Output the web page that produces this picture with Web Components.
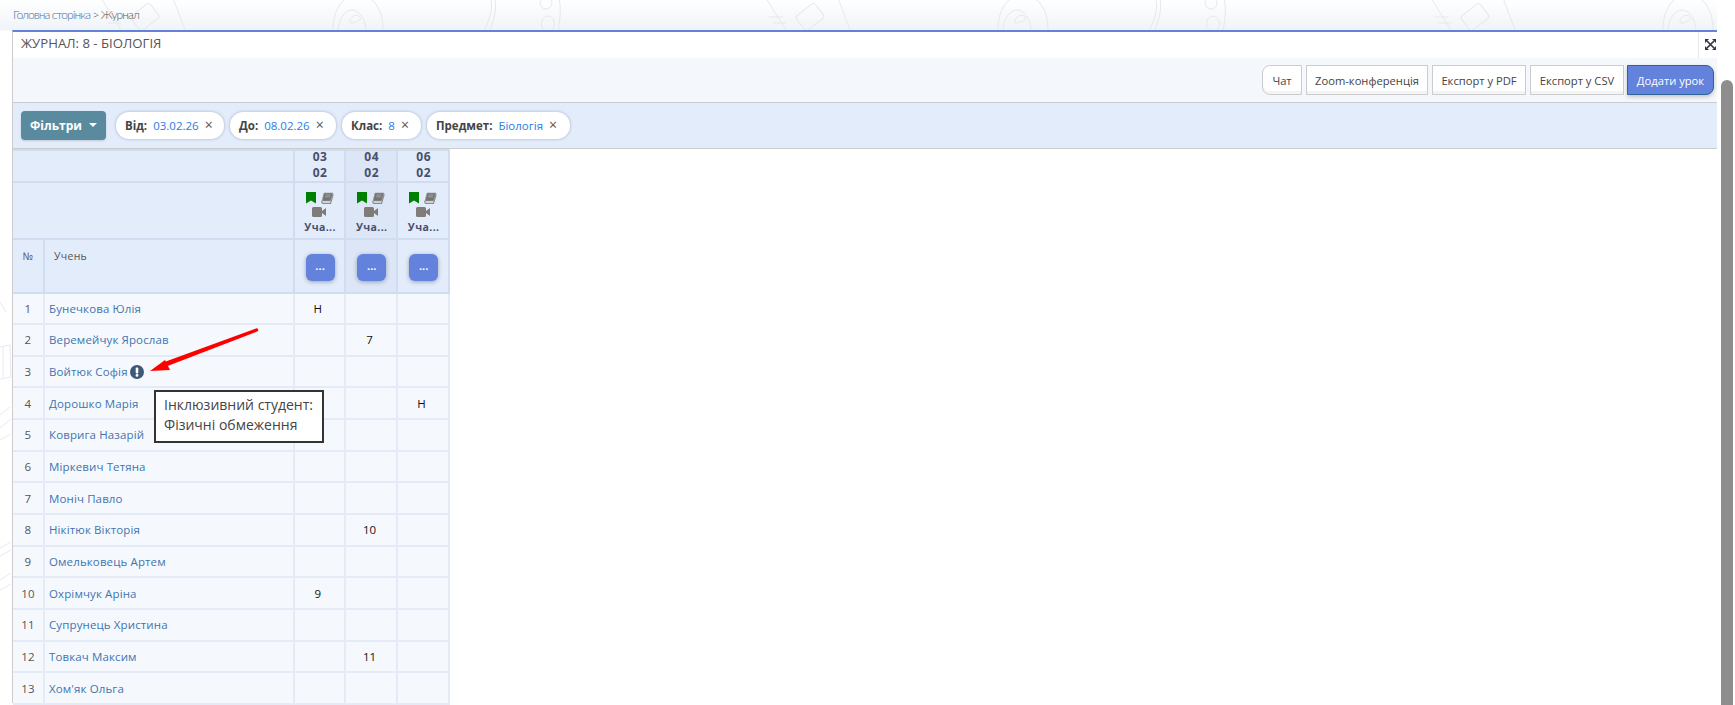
<!DOCTYPE html>
<html lang="uk"><head><meta charset="utf-8"><title>Журнал</title>
<style>
html,body{margin:0;height:705px;overflow:hidden;background:#fff;font-family:"Open Sans","Noto Sans",sans-serif}
</style></head>
<body>
<jr-app>
  <jr-breadcrumb slot="crumbs"><a>Головна сторінка</a> &gt; Журнал</jr-breadcrumb>
  <jr-panel heading="ЖУРНАЛ: 8 - БІОЛОГІЯ">
    <jr-toolbar slot="toolbar">
      <jr-button class="first" style="width:40px">Чат</jr-button>
      <jr-button style="width:122px">Zoom-конференція</jr-button>
      <jr-button style="width:94px">Експорт у PDF</jr-button>
      <jr-button style="width:94px">Експорт у CSV</jr-button>
      <jr-button class="primary" style="width:87px;margin-left:-1px">Додати урок</jr-button>
    </jr-toolbar>
    <jr-filters slot="filters">
      <jr-filter-button>Фільтри</jr-filter-button>
      <jr-chip style="width:108px" label="Від:" value="03.02.26"></jr-chip>
      <jr-chip style="width:106px" label="До:" value="08.02.26"></jr-chip>
      <jr-chip style="width:79px" label="Клас:" value="8"></jr-chip>
      <jr-chip style="width:143px" label="Предмет:" value="Біологія"></jr-chip>
    </jr-filters>
    <jr-gradebook></jr-gradebook>
  </jr-panel>
</jr-app>
<script>
function el(name,css,html){
  customElements.define(name,class extends HTMLElement{
    connectedCallback(){
      if(this.shadowRoot)return;
      const r=this.attachShadow({mode:'open'});
      const t=typeof html==='function'?html(this):html;
      r.innerHTML='<style>'+css+'</style>'+t;
    }
  });
}
const tile=(x)=>`<g transform="translate(${x} 0)" fill="none" stroke="#e6e8ec" stroke-width="1">
<path d="M101 -2l20 32M173 -2l12 32M104 17h14M108 23h13"/>
<rect x="133" y="8" width="24" height="18" rx="3" transform="rotate(-38 145 17)"/>
<ellipse cx="358" cy="28" rx="25" ry="34"/><ellipse cx="352" cy="32" rx="14" ry="22"/><path d="M350 20c2-5 8-6 10-3s-2 4-5 5-5 3-5-2"/>
<path d="M490 -5c4 14 0 24-8 40M494 -5c4 14 0 24-6 40"/>
<circle cx="546" cy="3" r="6"/><ellipse cx="548" cy="24" rx="6.500" ry="8"/><ellipse cx="546" cy="44" rx="6" ry="7"/><path d="M558 -5c4 12 2 24 0 36"/>
</g>`;
el('jr-app',`:host{display:block;position:relative;width:1735px;height:705px;overflow:hidden;
  background:linear-gradient(#fff 0,#f0f3f8 30px,#fff 31px)}
.deco{position:absolute;left:0;top:0;width:1735px;height:705px;pointer-events:none}
.wrap{position:relative;display:grid;grid-template-columns:1fr 18px;height:705px}
.main{display:flex;flex-direction:column;min-width:0;padding-left:12px}
.sb{background:#fff;padding:80px 2px 0 4px;box-sizing:border-box}
.sb i{display:block;height:625px;background:#8e8e8e;border-radius:6px 6px 0 0}`,
()=>`<svg class="deco" viewBox="0 0 1735 705" aria-hidden="true">${tile(0)}${tile(665)}${tile(1330)}
<g fill="none" stroke="#e8e9ed"><path d="M0 347l10-2 1 32-11 2M3 347v30M0 302l6 10M0 415l10-8M0 428l11-9M0 440l11-6M0 548l11-6M0 556l11-6M0 580l11-7M0 590l11-6"/></g></svg>
<div class="wrap"><div class="main"><slot name="crumbs"></slot><slot></slot></div><div class="sb"><i></i></div></div>`);
el('jr-breadcrumb',`:host{display:block;height:30px;box-sizing:border-box;padding:7px 0 0 1px;font:300 12px/16px Lato,sans-serif;letter-spacing:-.9px;color:#555}
::slotted(a){color:#4a6f9e}`,`<slot></slot>`);
el('jr-panel',`:host{display:block;border-top:2px solid #6282dc;border-left:1px solid #ccc;background:#fff;height:673px;box-sizing:border-box}
.head{display:flex;height:26px;align-items:center;background:#fff;color:#555;font:400 13.200px "Open Sans",sans-serif}
.title{flex:1;padding:0 0 5px 8px}
.exp{width:19px;height:26px;box-sizing:border-box;border-left:1px solid #e8e8e8;padding:7px 0 0 6px}
svg{display:block}`,
h=>`<div class="head"><div class="title">${h.getAttribute('heading')}</div><div class="exp"><svg width="11" height="11" viewBox="0 0 11 11"><path d="M0 0h4L0 4zM11 0v4L7 0zM0 11V7l4 4zM11 11H7l4-4z" fill="#2d3340"/><path d="M2 2l7 7M9 2L2 9" stroke="#2d3340" stroke-width="1.600"/></svg></div></div><slot name="toolbar"></slot><slot name="filters"></slot><slot></slot>`);
el('jr-toolbar',`:host{display:flex;justify-content:flex-end;align-items:center;gap:4px;height:45px;box-sizing:border-box;padding:0 3px 0 0;background:#f4f7fb;border-bottom:1px solid #ccc}`,`<slot></slot>`);
el('jr-button',`:host{display:flex;align-items:center;justify-content:center;height:30px;box-sizing:border-box;background:#fff;border:1px solid #ccc;box-shadow:inset 0 -3px 0 #f3f4f6;font:400 11.200px "Open Sans",sans-serif;color:#444;white-space:nowrap}
:host(.first){border-radius:8px 0 0 8px}
:host(.primary){background:#6282dc;border-color:#2f6496;border-radius:0 8px 8px 0;color:#fff;box-shadow:0 2px 4px rgba(0,0,0,.2)}`,`<slot></slot>`);
el('jr-filters',`:host{display:flex;align-items:center;height:46px;box-sizing:border-box;padding:0 0 1px 8px;gap:6px;background:#e3ecfb;border-bottom:1px solid #ccc}`,`<slot></slot>`);
el('jr-filter-button',`:host{display:flex;align-items:center;gap:7px;width:85px;height:29px;box-sizing:border-box;justify-content:center;margin-right:4px;background:#5a8a9e;color:#fff;border-radius:4px;font:700 12px "Open Sans",sans-serif;box-shadow:0 1px 2px rgba(0,0,0,.15)}
i{border:4px solid transparent;border-top-color:#fff;border-bottom:0}`,`<slot></slot><i></i>`);
el('jr-chip',`:host{display:flex;align-items:center;height:27px;box-sizing:border-box;padding:0 0 0 9px;background:#fff;border-radius:13px;box-shadow:0 0 3px rgba(70,90,120,.45);font:400 11.500px "Open Sans",sans-serif;white-space:nowrap}
b{color:#444;margin-right:6px;font-weight:700}span{color:#2a7de1}u{text-decoration:none;color:#555;margin-left:6px;font-size:14px;position:relative;top:-1px}`,
h=>`<b>${h.getAttribute('label')}</b><span>${h.getAttribute('value')}</span><u>×</u>`);
const book=`<svg width="13" height="12" viewBox="0 0 13 12"><path d="M3 1h9l-2.500 8H1z" fill="#747474" stroke="#9b9b9b" stroke-width=".6"/><path d="M1 9c-.6 1.500.2 2.300 1 2.300h7.500l2.700-9" fill="none" stroke="#8f8a84" stroke-width="1.200"/><path d="M4.500 3h5M4 4.800h5" stroke="#b5b5b5" stroke-width=".7"/></svg>`;
const mark=`<svg width="10" height="12" viewBox="0 0 10 12"><path d="M0 0h10v11.500L5 8.500 0 11.500z" fill="#008000"/></svg>`;
const cam=`<svg width="14" height="10" viewBox="0 0 14 10"><rect x="0" y="0" width="10" height="10" rx="1.500" fill="#7f7b78"/><path d="M10 4l4-3v8l-4-3z" fill="#7f7b78"/></svg>`;
const info=`<svg class="inf" width="14" height="14" viewBox="0 0 14 14"><circle cx="7" cy="7" r="7" fill="#3f5878"/><rect x="5.700" y="2.600" width="2.600" height="5.800" rx="1" fill="#fff"/><circle cx="7" cy="10.400" r="1.400" fill="#fff"/></svg>`;
const students=[['Бунечкова Юлія','Н','',''],['Веремейчук Ярослав','','7',''],['Войтюк Софія','','',''],['Дорошко Марія','','','Н'],['Коврига Назарій','','',''],['Міркевич Тетяна','','',''],['Моніч Павло','','',''],['Нікітюк Вікторія','','10',''],['Омельковець Артем','','',''],['Охрімчук Аріна','9','',''],['Супрунець Христина','','',''],['Товкач Максим','','11',''],['Хом\'як Ольга','','','']];
const dates=['03','04','06'];
el('jr-gradebook',`:host{display:block;position:relative;font-family:"Open Sans",sans-serif}
table{border-collapse:collapse;table-layout:fixed;width:436px}
th,td{border:2px solid #e4ebf6;padding:0;box-sizing:border-box}
thead th{background:#e3ecfb;border-color:#d0dcef;font-weight:400}
th:first-child,td:first-child{border-left:0}
.hl{background:#dce6f7!important}
.d{font:700 12px/16px "Open Sans",sans-serif;color:#475069;letter-spacing:.5px;text-align:center;vertical-align:top;padding-left:1.500px}
.d div{margin:-2px 0 0}
.ic{height:57px;vertical-align:top;padding:9px 0 0 1.500px}
.ic div{display:flex;justify-content:center;align-items:center;gap:5px;height:12px;margin-left:-1px}
.ic .c{margin:2px 0 0 -2px}
.ic .t{font:700 10.500px/14px "Open Sans",sans-serif;color:#475069;letter-spacing:.4px;height:14px;margin:2px 0 0}
.lab{font:400 10.500px "Open Sans",sans-serif;color:#555;vertical-align:top;padding-top:9px;letter-spacing:.3px}
.n{text-align:center}.s{text-align:left;padding-left:9px}
.m{vertical-align:top;padding:14px 0 0 1.500px;height:53.500px}
.m i{display:flex;margin:0 auto;width:29px;height:27px;border-radius:6px;background:#6282dc;box-shadow:0 1px 4px rgba(60,70,100,.45);color:#fff;font:700 11px/24px "Open Sans",sans-serif;justify-content:center}
tbody td{background:#f5f9fe;height:31.670px;font:400 11.500px "Open Sans",sans-serif;text-align:center;color:#111;padding-right:3px}
tbody td.num{color:#555;padding:0;letter-spacing:.2px}
tbody td.name{text-align:left;padding:0 0 0 4px;color:#3f74ae;letter-spacing:.12px;white-space:nowrap}
.inf{vertical-align:-3px;margin-left:2px}
.tip{position:absolute;left:141px;top:241px;width:170px;height:53px;box-sizing:border-box;border:2px solid #333;background:#fff;padding:3px 8px;font:400 14px/20px "Open Sans",sans-serif;color:#444;white-space:nowrap}
.arrow{position:absolute;left:125px;top:170px;pointer-events:none}`,
()=>{
 const cols=`<colgroup><col style="width:31px"><col style="width:249.500px"><col style="width:51.670px"><col style="width:51.670px"><col style="width:52.160px"></colgroup>`;
 const hc=i=>i===1?' hl':'';
 const h1=dates.map((d,i)=>`<th class="d${hc(i)}"><div>${d}<br>02</div></th>`).join('');
 const h2=dates.map((d,i)=>`<th class="ic${hc(i)}"><div>${mark}${book}</div><div class="c">${cam}</div><div class="t">Уча...</div></th>`).join('');
 const h3=dates.map((d,i)=>`<th class="m${hc(i)}"><i>...</i></th>`).join('');
 const rows=students.map((s,i)=>`<tr><td class="num">${i+1}</td><td class="name">${s[0]}${i===2?info:''}</td><td>${s[1]}</td><td>${s[2]}</td><td>${s[3]}</td></tr>`).join('');
 return `<table>${cols}<thead><tr><th colspan="2" class="d"></th>${h1}</tr><tr><th colspan="2" class="ic"></th>${h2}</tr><tr><th class="lab n">№</th><th class="lab s">Учень</th>${h3}</tr></thead><tbody>${rows}</tbody></table>
 <div class="tip">Інклюзивний студент:<br>Фізичні обмеження</div>
 <svg class="arrow" width="125" height="60" viewBox="0 0 125 60"><path d="M118 9.500a1.600 1.600 0 0 1 1.200 3L27 48l-2-4.500z" fill="#f00"/><path d="M12 52L27 41l5 10z" fill="#f00"/></svg>`;
});
</script>
</body></html>
